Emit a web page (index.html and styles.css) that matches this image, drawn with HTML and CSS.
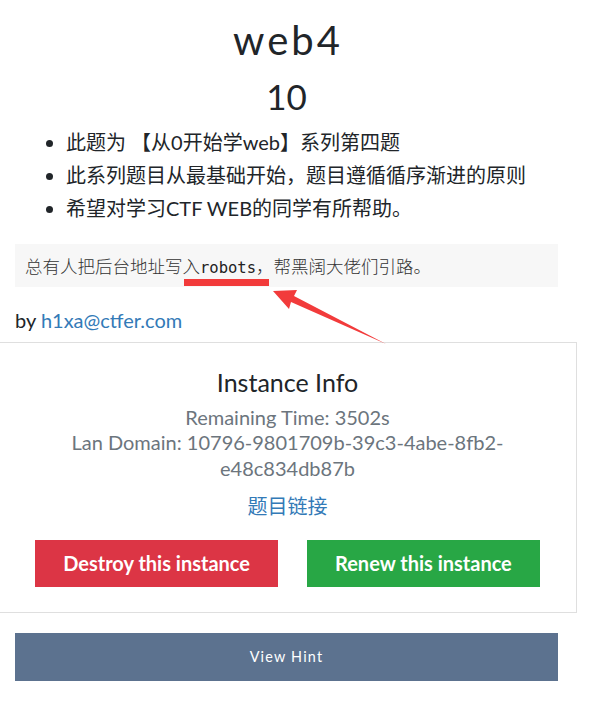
FILE: index.html
```html
<!DOCTYPE html>
<html lang="zh">
<head>
<meta charset="utf-8">
<title>web4</title>
<link rel="stylesheet" href="styles.css">
</head>
<body>
<div class="page">
  <h2 class="chal-name">web4</h2>
  <h3 class="chal-value">10</h3>
  <ul class="desc">
    <li>此题为 【从0开始学web】系列第四题</li>
    <li>此系列题目从最基础开始，题目遵循循序渐进的原则</li>
    <li>希望对学习CTF WEB的同学有所帮助。</li>
  </ul>
  <pre class="hint-box">总有人把后台地址写入<span class="mono">robots</span>，帮黑阔大佬们引路。</pre>
  <p class="author">by <a href="#">h1xa@ctfer.com</a></p>
  <div class="card">
    <h5 class="card-title">Instance Info</h5>
    <p class="muted">Remaining Time: 3502s</p>
    <p class="muted domain">Lan Domain: 10796-9801709b-39c3-4abe-8fb2-<br>e48c834db87b</p>
    <p class="link-line"><a href="#">题目链接</a></p>
    <div class="actions">
      <button class="btn btn-danger">Destroy this instance</button>
      <button class="btn btn-success">Renew this instance</button>
    </div>
  </div>
  <button class="btn-hint">View Hint</button>
</div>
<svg class="annot" width="590" height="705" viewBox="0 0 590 705">
  <rect x="184" y="279" width="85" height="7" fill="#f23b3b"/>
  <polygon points="273,291 297,290 294,296 386,344 291,302 289,309" fill="#f23b3b"/>
</svg>
</body>
</html>
```
FILE: styles.css
```css
html, body {
  margin: 0;
  padding: 0;
  background: #fff;
}
body {
  font-family: Lato, "Noto Sans CJK SC", sans-serif;
  color: #212529;
  font-size: 20px;
  line-height: 30px;
  position: relative;
  overflow: hidden;
  width: 590px;
  height: 705px;
}
.page {
  width: 543px;
  padding: 16px 0 0 15px;
}
.chal-name {
  margin: 0;
  font-family: Lato, sans-serif;
  font-weight: 400;
  font-size: 40px;
  line-height: 48px;
  letter-spacing: 3px;
  text-align: center;
  text-indent: 3px;
}
.chal-value {
  margin: 11px 0 0;
  font-weight: 400;
  font-size: 35px;
  line-height: 42px;
  text-align: center;
}
.desc {
  margin: 9px 0 0;
  padding-left: 51px;
  line-height: 33px;
}
.hint-box {
  margin: 19px 0 0;
  padding: 10px 10px;
  height: 23px;
  background: #f7f7f7;
  font-family: "Noto Sans CJK SC", sans-serif;
  font-size: 17.5px;
  line-height: 23px;
  color: #333;
  font-weight: 300;
}
.mono {
  font-family: "DejaVu Sans Mono", monospace;
  font-size: 15.5px;
  line-height: 1;
  font-weight: 400;
  color: #222;
}
.author {
  margin: 18px 0 0;
}
a {
  color: #337ab7;
  text-decoration: none;
}
.card {
  margin: 7px -19px 0 -17px;
  border: 1px solid #dfdfdf;
  padding: 24px 0 25px;
  text-align: center;
}
.card-title {
  margin: 0;
  font-weight: 400;
  font-size: 25px;
  line-height: 30px;
}
.muted {
  margin: 0;
  color: #6c757d;
  font-size: 20px;
  line-height: 25.5px;
}
.card-title + .muted {
  margin-top: 7.5px;
}
.link-line {
  margin: 10px 0 0;
}
.actions {
  margin-top: 18.5px;
  display: flex;
  justify-content: center;
  gap: 29px;
}
.btn {
  border: 0;
  border-radius: 0;
  color: #fff;
  font-family: Lato, sans-serif;
  font-weight: 700;
  font-size: 20px;
  line-height: 30px;
  padding: 8.5px 28px;
}
.btn-danger { background: #dc3545; }
.btn-success { background: #28a745; }
.btn-hint {
  display: block;
  width: 543px;
  margin-top: 20px;
  border: 0;
  background: #5c728f;
  color: #fff;
  font-family: Lato, sans-serif;
  font-size: 14.4px;
  letter-spacing: 1.2px;
  line-height: 24px;
  padding: 12px 0;
}
.annot {
  position: absolute;
  left: 0;
  top: 0;
  pointer-events: none;
}
```
